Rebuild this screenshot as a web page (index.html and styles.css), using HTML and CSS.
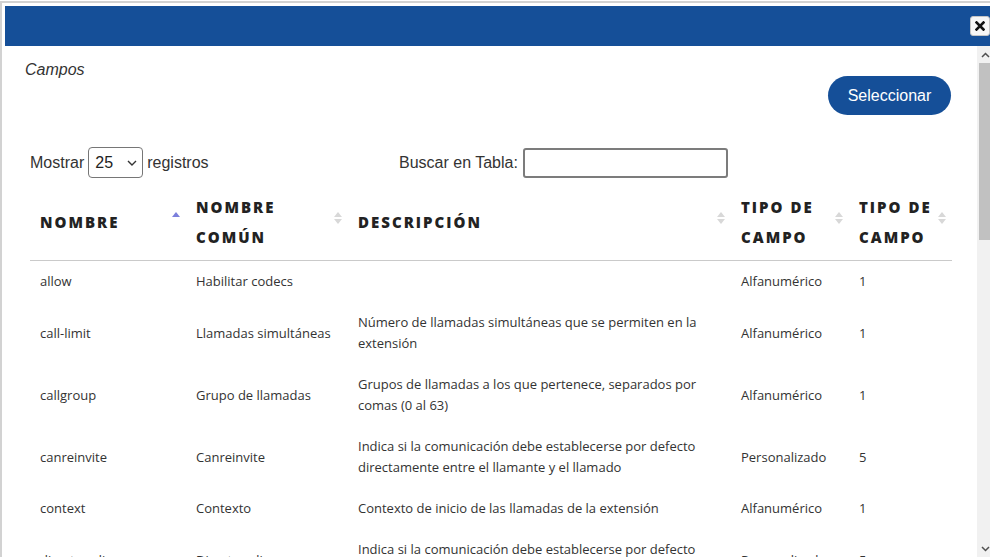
FILE: index.html
```html
<!DOCTYPE html>
<html lang="es">
<head>
<meta charset="utf-8">
<title>Campos</title>
<link rel="stylesheet" href="styles.css">
</head>
<body>
<div class="frame">
  <div class="titlebar">
    <button class="close" type="button" aria-label="Cerrar">
      <svg width="10" height="10" viewBox="0 0 10 10"><path d="M1.5 1.5 L8.5 8.5 M8.5 1.5 L1.5 8.5" stroke="#111" stroke-width="2.6" stroke-linecap="square"/></svg>
    </button>
  </div>
  <div class="main">
    <div class="content">
      <div class="head">
        <div class="title">Campos</div>
        <button class="btn" type="button">Seleccionar</button>
      </div>
      <div class="block">
        <div class="toolbar">
          <div class="length">
            <span>Mostrar</span>
            <span class="select-wrap">
              <select class="select"><option>25</option></select>
              <svg class="chev" width="10" height="6" viewBox="0 0 10 6"><path d="M1 1 L5 5 L9 1" fill="none" stroke="#333" stroke-width="1.4"/></svg>
            </span>
            <span>registros</span>
          </div>
          <div class="filter">
            <span>Buscar en Tabla:</span>
            <input class="search" type="text">
          </div>
        </div>
        <table class="grid">
          <colgroup>
            <col class="c1"><col class="c2"><col class="c3"><col class="c4"><col class="c5">
          </colgroup>
          <thead>
            <tr>
              <th class="sort asc">Nombre</th>
              <th class="sort">Nombre común</th>
              <th class="sort">Descripción</th>
              <th class="sort">Tipo de campo</th>
              <th class="sort">Tipo de campo</th>
            </tr>
          </thead>
          <tbody>
            <tr><td>allow</td><td>Habilitar codecs</td><td></td><td>Alfanumérico</td><td>1</td></tr>
            <tr><td>call-limit</td><td>Llamadas simultáneas</td><td>Número de llamadas simultáneas que se permiten en la extensión</td><td>Alfanumérico</td><td>1</td></tr>
            <tr><td>callgroup</td><td>Grupo de llamadas</td><td>Grupos de llamadas a los que pertenece, separados por comas (0 al 63)</td><td>Alfanumérico</td><td>1</td></tr>
            <tr><td>canreinvite</td><td>Canreinvite</td><td>Indica si la comunicación debe establecerse por defecto directamente entre el llamante y el llamado</td><td>Personalizado</td><td>5</td></tr>
            <tr><td>context</td><td>Contexto</td><td>Contexto de inicio de las llamadas de la extensión</td><td>Alfanumérico</td><td>1</td></tr>
            <tr><td>directmedia</td><td>Directmedia</td><td>Indica si la comunicación debe establecerse por defecto directamente entre el llamante y el llamado</td><td>Personalizado</td><td>5</td></tr>
          </tbody>
        </table>
      </div>
    </div>
    <div class="scrollbar">
      <div class="sb-btn"><svg width="9" height="6" viewBox="0 0 9 6"><path d="M1 5 L4.5 1.5 L8 5" fill="none" stroke="#505050" stroke-width="1.5"/></svg></div>
      <div class="sb-track"><div class="sb-thumb"></div></div>
      <div class="sb-btn"><svg width="9" height="6" viewBox="0 0 9 6"><path d="M1 1 L4.5 4.5 L8 1" fill="none" stroke="#505050" stroke-width="1.5"/></svg></div>
    </div>
  </div>
</div>
</body>
</html>
```
FILE: styles.css
```css
html, body {
  margin: 0;
  padding: 0;
  background: #fff;
  overflow: hidden;
}
body {
  width: 990px;
  height: 557px;
  font-family: "Liberation Sans", Arial, sans-serif;
  color: #333;
}
.frame {
  width: 989px;
  margin-top: 1px;
  border-top: 2px solid #d2d2d2;
  border-left: 2px solid #d2d2d2;
  padding: 3px 0 0 3px;
  box-sizing: content-box;
}
.titlebar {
  position: relative;
  height: 40px;
  background: #154f98;
}
.close {
  position: absolute;
  top: 10px;
  right: 4px;
  width: 20px;
  height: 20px;
  padding: 0;
  border: 1px solid #c5c5c5;
  border-radius: 3px;
  background: #f6f6f6;
  display: flex;
  align-items: center;
  justify-content: center;
}
.main {
  display: flex;
  height: 511px;
}
.content {
  flex: 1;
  overflow: hidden;
  padding: 0 20px;
}
.head {
  display: flex;
  justify-content: space-between;
  align-items: flex-start;
}
.title {
  margin-top: 15px;
  font-style: italic;
  font-size: 16px;
  line-height: 18px;
  color: #333;
}
.btn {
  margin-top: 30px;
  margin-right: 6px;
  width: 123px;
  height: 39px;
  border: none;
  border-radius: 20px;
  background: #154f98;
  color: #fff;
  font-family: "Liberation Sans", Arial, sans-serif;
  font-size: 16px;
  padding: 0;
}
.block {
  padding: 0 6px 0 5px;
}
.toolbar {
  display: flex;
  align-items: center;
  margin-top: 32px;
  font-size: 16px;
  color: #333;
}
.length {
  width: 369px;
  display: flex;
  align-items: center;
  gap: 4px;
}
.select-wrap {
  position: relative;
  display: inline-block;
  height: 31px;
}
.select {
  appearance: none;
  -webkit-appearance: none;
  width: 55px;
  height: 31px;
  border: 1px solid #767676;
  border-radius: 4px;
  background: #fff;
  padding: 0 0 0 6px;
  font-family: "Liberation Sans", Arial, sans-serif;
  font-size: 16px;
  color: #222;
}
.chev {
  position: absolute;
  right: 6px;
  top: 13px;
  pointer-events: none;
}
.filter {
  display: flex;
  align-items: center;
  gap: 5px;
}
.search {
  width: 205px;
  height: 30px;
  box-sizing: border-box;
  border: 2px solid #7c7c7c;
  border-radius: 3px;
  margin: 1px 0 0;
}
.grid {
  margin-top: 6px;
  width: 922px;
  table-layout: fixed;
  border-collapse: collapse;
  font-family: "Open Sans", "Noto Sans", sans-serif;
}
.c1 { width: 156px; }
.c2 { width: 162px; }
.c3 { width: 383px; }
.c4 { width: 118px; }
.c5 { width: 103px; }
.grid th {
  position: relative;
  text-align: left;
  vertical-align: middle;
  padding: 8px 18px 8px 10px;
  font-size: 15px;
  font-weight: 800;
  line-height: 30px;
  letter-spacing: 2px;
  text-transform: uppercase;
  color: #222;
  border-bottom: 1px solid #cacaca;
}
.sort::before,
.sort::after {
  content: "";
  position: absolute;
  right: 6px;
  width: 0;
  height: 0;
  border-left: 4px solid transparent;
  border-right: 4px solid transparent;
}
.sort::before {
  top: calc(50% - 10px);
  border-bottom: 5px solid #d8d8d8;
}
.sort::after {
  top: calc(50% - 3px);
  border-top: 5px solid #d8d8d8;
}
.sort.asc::before {
  border-bottom-color: #7b7fdc;
}
.sort.asc::after {
  display: none;
}
.grid td {
  padding: 10px;
  font-size: 13px;
  line-height: 21px;
  color: #333;
  vertical-align: middle;
}
.scrollbar {
  width: 17px;
  display: flex;
  flex-direction: column;
  background: #f1f1f1;
}
.sb-btn {
  height: 17px;
  display: flex;
  align-items: center;
  justify-content: center;
}
.sb-track {
  flex: 1;
}
.sb-thumb {
  height: 177px;
  margin: 0 2px 0 2px;
  background: #c1c1c1;
}
```
